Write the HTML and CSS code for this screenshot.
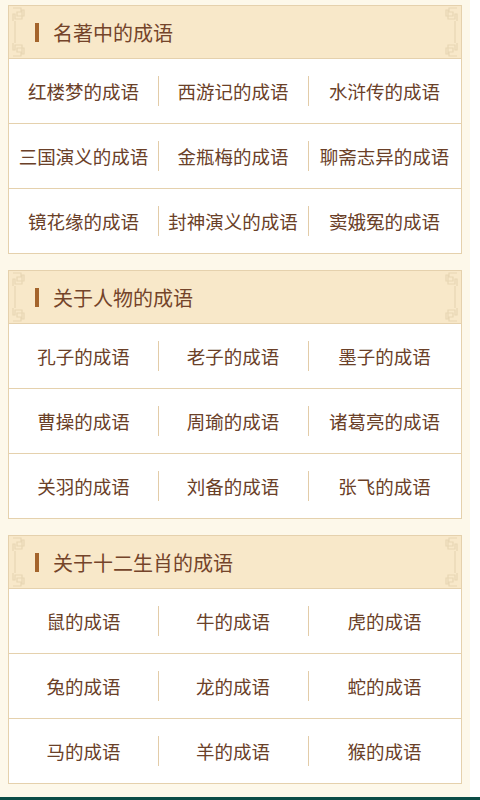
FILE: index.html
```html
<!DOCTYPE html>
<html lang="zh-CN">
<head>
    <meta charset="UTF-8">
    <meta name="viewport" content="width=device-width, initial-scale=1.0">
    <title>成语分类</title>
    <link rel="stylesheet" href="styles.css">
</head>
<body>

    <div class="page">
        <!-- 名著 -->
        <div class="card">
            <div class="card-head">
                <svg class="knot knot-left" viewBox="0 0 16 50" width="16" height="50">
                    <path d="M2 1H10V5H6V9H13V3H11V12H4V7H2V14M4 14V36M2 49H10V45H6V41H13V47H11V38H4V43H2V36"/>
                </svg>
                <span class="mark"></span>
                <h2>名著中的成语</h2>
                <svg class="knot knot-right" viewBox="0 0 16 50" width="16" height="50">
                    <path d="M2 1H10V5H6V9H13V3H11V12H4V7H2V14M4 14V36M2 49H10V45H6V41H13V47H11V38H4V43H2V36"/>
                </svg>
            </div>
            <div class="grid">
                <a>红楼梦的成语</a>
                <a>西游记的成语</a>
                <a>水浒传的成语</a>
                <a>三国演义的成语</a>
                <a>金瓶梅的成语</a>
                <a>聊斋志异的成语</a>
                <a>镜花缘的成语</a>
                <a>封神演义的成语</a>
                <a>窦娥冤的成语</a>
            </div>
        </div>

        <!-- 人物 -->
        <div class="card">
            <div class="card-head">
                <svg class="knot knot-left" viewBox="0 0 16 50" width="16" height="50">
                    <path d="M2 1H10V5H6V9H13V3H11V12H4V7H2V14M4 14V36M2 49H10V45H6V41H13V47H11V38H4V43H2V36"/>
                </svg>
                <span class="mark"></span>
                <h2>关于人物的成语</h2>
                <svg class="knot knot-right" viewBox="0 0 16 50" width="16" height="50">
                    <path d="M2 1H10V5H6V9H13V3H11V12H4V7H2V14M4 14V36M2 49H10V45H6V41H13V47H11V38H4V43H2V36"/>
                </svg>
            </div>
            <div class="grid">
                <a>孔子的成语</a>
                <a>老子的成语</a>
                <a>墨子的成语</a>
                <a>曹操的成语</a>
                <a>周瑜的成语</a>
                <a>诸葛亮的成语</a>
                <a>关羽的成语</a>
                <a>刘备的成语</a>
                <a>张飞的成语</a>
            </div>
        </div>

        <!-- 生肖 -->
        <div class="card">
            <div class="card-head">
                <svg class="knot knot-left" viewBox="0 0 16 50" width="16" height="50">
                    <path d="M2 1H10V5H6V9H13V3H11V12H4V7H2V14M4 14V36M2 49H10V45H6V41H13V47H11V38H4V43H2V36"/>
                </svg>
                <span class="mark"></span>
                <h2>关于十二生肖的成语</h2>
                <svg class="knot knot-right" viewBox="0 0 16 50" width="16" height="50">
                    <path d="M2 1H10V5H6V9H13V3H11V12H4V7H2V14M4 14V36M2 49H10V45H6V41H13V47H11V38H4V43H2V36"/>
                </svg>
            </div>
            <div class="grid">
                <a>鼠的成语</a>
                <a>牛的成语</a>
                <a>虎的成语</a>
                <a>兔的成语</a>
                <a>龙的成语</a>
                <a>蛇的成语</a>
                <a>马的成语</a>
                <a>羊的成语</a>
                <a>猴的成语</a>
            </div>
        </div>
    </div>

    <div class="bottom-bar"></div>

</body>
</html>
```

FILE: styles.css
```css
body, html {
    margin: 0;
    padding: 0;
    background-color: #ffffff;
    font-family: "Noto Sans CJK SC", "Noto Sans", sans-serif;
    overflow: hidden;
}

/* Cream page, slightly narrower than the window */
.page {
    width: 470px;
    height: 797px;
    box-sizing: border-box;
    padding: 5px 0 0 8px;
    background-color: #fdf8ea;
    display: flex;
    flex-direction: column;
    gap: 16px;
}

.card {
    width: 454px;
    box-sizing: border-box;
    border: 1px solid #e5d1ad;
    background-color: #fff;
}

/* Section header */
.card-head {
    position: relative;
    height: 52px;
    display: flex;
    align-items: center;
    padding-left: 26px;
    background-color: #f8e8c9;
    border-bottom: 1px solid #e5d1ad;
}

.card-head h2 {
    margin: 0;
    font-size: 20px;
    font-weight: normal;
    color: #74442a;
}

.mark {
    width: 4px;
    height: 19px;
    margin-right: 14px;
    background-color: #a4642c;
}

/* Corner ornaments */
.knot {
    position: absolute;
    top: 1px;
}

.knot path {
    fill: none;
    stroke: #e8d6b4;
    stroke-width: 1.2;
}

.knot-left {
    left: 2px;
}

.knot-right {
    right: 2px;
    transform: scaleX(-1);
}

/* Link grid */
.grid {
    display: grid;
    grid-template-columns: 149px 150px 1fr;
}

.grid a {
    position: relative;
    height: 64px;
    display: flex;
    align-items: center;
    justify-content: center;
    font-size: 18.5px;
    color: #6a4028;
    border-bottom: 1px solid #e5d1ad;
    white-space: nowrap;
    cursor: pointer;
}

.grid a:nth-last-child(-n+3) {
    border-bottom: none;
}

.grid a:not(:nth-child(3n+1))::before {
    content: "";
    position: absolute;
    left: 0;
    top: 17px;
    width: 1px;
    height: 30px;
    background-color: #e3cca8;
}

.bottom-bar {
    height: 3px;
    background-color: #0c4c46;
}
```
